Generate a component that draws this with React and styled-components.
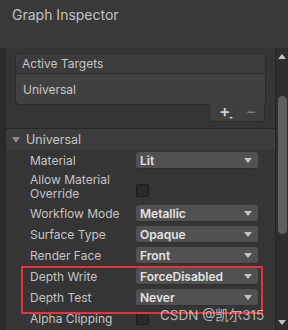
import React from "react";
import styled, { createGlobalStyle } from "styled-components";

const GlobalStyle = createGlobalStyle`
  html, body {
    margin: 0;
    padding: 0;
    background: #383838;
  }
  body {
    font-family: Inter, "Noto Sans", "Noto Sans CJK SC", sans-serif;
  }
`;

const Window = styled.div`
  position: relative;
  width: 288px;
  height: 330px;
  overflow: hidden;
  display: flex;
  flex-direction: column;
  background: #383838;
`;

const Header = styled.div`
  height: 48px;
  flex-shrink: 0;
  padding: 6px 0 0 12px;
  box-sizing: border-box;
  color: #c2c2c2;
  font-size: 14px;
  background: #393939;
`;

const Body = styled.div`
  flex: 1;
  display: flex;
  min-height: 0;
`;

const LeftStrip = styled.div`
  width: 5px;
  background: #2a2a2a;
  border-right: 1px solid #242424;
`;

const Content = styled.div`
  flex: 1;
  display: flex;
  flex-direction: column;
  padding-top: 5px;
  background: #353535;
  overflow: hidden;
  min-height: 0;
  & > * {
    flex-shrink: 0;
  }
`;

const ListBox = styled.div`
  margin: 0 9px 0 9px;
  border: 1px solid #2a2a2a;
  border-radius: 4px;
  background: #414141;
  overflow: hidden;
`;

const ListHeader = styled.div`
  height: 19px;
  display: flex;
  align-items: center;
  padding-left: 6px;
  font-size: 12px;
  color: #c4c4c4;
  background: #3b3b3b;
  border-bottom: 1px solid #2a2a2a;
`;

const ListItem = styled.div`
  height: 30px;
  display: flex;
  align-items: center;
  padding-left: 7px;
  font-size: 12px;
  color: #c8c8c8;
`;

const FooterRow = styled.div`
  display: flex;
  justify-content: flex-end;
  padding-right: 10px;
`;

const FooterTab = styled.div`
  width: 56px;
  height: 18px;
  margin-top: -1px;
  display: flex;
  align-items: center;
  gap: 15px;
  padding: 0 0 3px 9px;
  box-sizing: border-box;
  background: #3f3f3f;
  border: 1px solid #2a2a2a;
  border-top: none;
  border-radius: 0 0 4px 4px;
  color: #d0d0d0;
  font-size: 17px;
  font-weight: 600;
  line-height: 1;
`;

const Plus = styled.span`
  position: relative;
  &::after {
    content: "";
    position: absolute;
    right: -3px;
    bottom: 1px;
    border-left: 2px solid transparent;
    border-right: 2px solid transparent;
    border-top: 2px solid #d0d0d0;
  }
`;

const Minus = styled.span`
  color: #7a7a7a;
  font-weight: 400;
`;

const Foldout = styled.div`
  margin-top: 6px;
  height: 21px;
  display: flex;
  align-items: center;
  gap: 6px;
  padding-left: 6px;
  background: #3c3c3c;
  border-top: 1px solid #262626;
  color: #c4c4c4;
  font-size: 12.5px;
`;

const Triangle = styled.span`
  width: 0;
  height: 0;
  border-left: 4px solid transparent;
  border-right: 4px solid transparent;
  border-top: 6px solid #8a8a8a;
`;

const Row = styled.div`
  height: ${(p) => p.$h || 21}px;
  display: flex;
  align-items: center;
  padding-left: 24px;
`;

const Label = styled.div`
  width: 106px;
  font-size: 12px;
  line-height: 14px;
  color: #c4c4c4;
`;

const Dropdown = styled.div`
  width: 122px;
  height: 17px;
  box-sizing: border-box;
  display: flex;
  align-items: center;
  justify-content: space-between;
  padding: 0 6px 0 4px;
  background: #515151;
  border-radius: 3px;
  border-bottom: 1px solid #2f2f2f;
  color: #e2e2e2;
  font-size: 12px;
  font-weight: 600;
`;

const Arrow = styled.span`
  width: 0;
  height: 0;
  border-left: 4px solid transparent;
  border-right: 4px solid transparent;
  border-top: 5px solid #c4c4c4;
`;

const Checkbox = styled.div`
  width: 13px;
  height: 13px;
  box-sizing: border-box;
  margin-top: ${(p) => p.$offset || 0}px;
  background: #2a2a2a;
  border: 1px solid #1c1c1c;
  border-radius: 2px;
`;

const Scrollbar = styled.div`
  width: 12px;
  display: flex;
  flex-direction: column;
  align-items: center;
  background: #2e2e2e;
  border-left: 1px solid #262626;
`;

const ScrollArrow = styled.span`
  margin-top: ${(p) => (p.$down ? "auto" : "6px")};
  margin-bottom: ${(p) => (p.$down ? "5px" : "0")};
  width: 0;
  height: 0;
  border-left: 4px solid transparent;
  border-right: 4px solid transparent;
  ${(p) => (p.$down ? "border-top" : "border-bottom")}: 5px solid #c0c0c0;
`;

const Thumb = styled.div`
  margin-top: 37px;
  width: 9px;
  height: 138px;
  border-radius: 5px;
  background: #5e5e5e;
`;

const Highlight = styled.div`
  position: absolute;
  left: 21px;
  top: 266px;
  width: 242px;
  height: 48px;
  box-sizing: border-box;
  border: 2px solid #e8323a;
  pointer-events: none;
`;

const Watermark = styled.div`
  position: absolute;
  left: 160px;
  top: 304px;
  font-size: 13.5px;
  color: rgba(225, 225, 225, 0.75);
  font-family: Inter, "Noto Sans CJK SC", sans-serif;
  white-space: nowrap;
`;

const props = [
  { label: "Material", value: "Lit" },
  { label: "Allow Material Override", check: true, h: 32 },
  { label: "Workflow Mode", value: "Metallic" },
  { label: "Surface Type", value: "Opaque" },
  { label: "Render Face", value: "Front" },
  { label: "Depth Write", value: "ForceDisabled" },
  { label: "Depth Test", value: "Never" },
  { label: "Alpha Clipping", check: true },
  { label: "Cast Shadows", check: true },
];

export default function App() {
  return (
    <>
      <GlobalStyle />
      <Window>
        <Header>Graph Inspector</Header>
        <Body>
          <LeftStrip />
          <Content>
            <ListBox>
              <ListHeader>Active Targets</ListHeader>
              <ListItem>Universal</ListItem>
            </ListBox>
            <FooterRow>
              <FooterTab>
                <Plus>+</Plus>
                <Minus>−</Minus>
              </FooterTab>
            </FooterRow>
            <Foldout>
              <Triangle />
              Universal
            </Foldout>
            {props.map((p) => (
              <Row key={p.label} $h={p.h}>
                <Label>{p.label}</Label>
                {p.check ? (
                  <Checkbox $offset={p.h ? 6 : 0} />
                ) : (
                  <Dropdown>
                    {p.value}
                    <Arrow />
                  </Dropdown>
                )}
              </Row>
            ))}
          </Content>
          <Scrollbar>
            <ScrollArrow />
            <Thumb />
            <ScrollArrow $down />
          </Scrollbar>
        </Body>
        <Highlight />
        <Watermark>CSDN @凯尔315</Watermark>
      </Window>
    </>
  );
}
